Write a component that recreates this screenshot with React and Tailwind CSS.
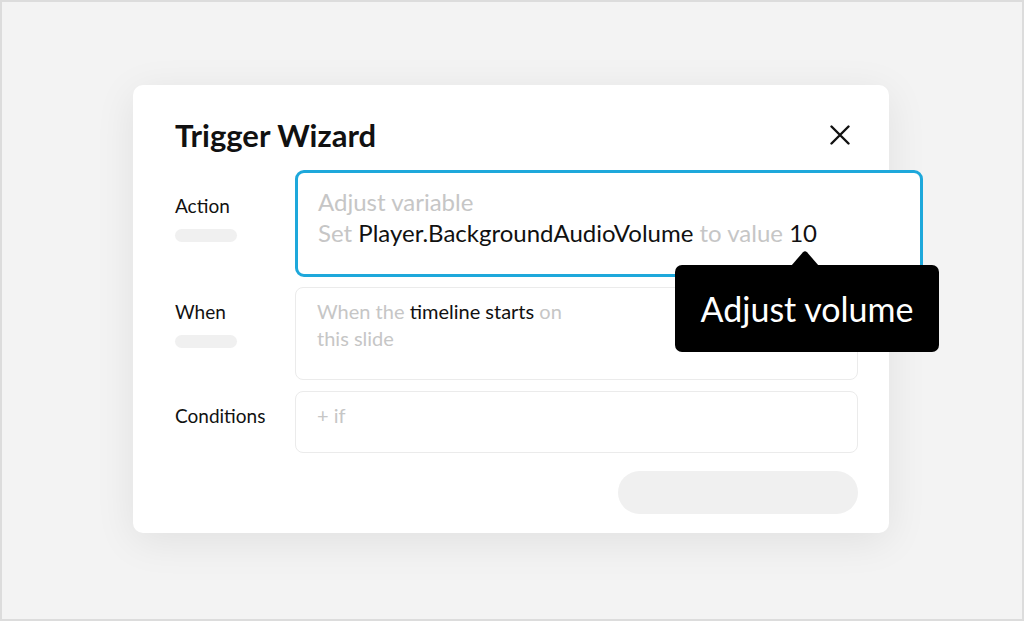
import React from "react";

export default function App() {
  return (
    <div
      className="w-[1024px] h-[621px] overflow-hidden bg-[#f3f3f3] border-2 border-[#dcdcdc]"
      style={{ fontFamily: "Lato, 'Open Sans', sans-serif" }}
    >
      <div className="ml-[131px] mt-[83px] w-[756px] h-[448px] bg-white rounded-[10px] shadow-[0_8px_40px_rgba(0,0,0,0.08)] pl-[42px] pt-[30px]">
        <div className="flex items-start justify-between pr-[39px]">
          <h1 className="text-[31px] leading-[40px] font-bold text-[#111]">Trigger Wizard</h1>
          <svg width="20" height="20" viewBox="0 0 20 20" className="mt-[10px]">
            <path d="M1.5 1.5 L18.5 18.5 M18.5 1.5 L1.5 18.5" stroke="#111" strokeWidth="2.4" strokeLinecap="round" />
          </svg>
        </div>

        <div className="mt-[15px] flex flex-col">
          {/* Action row */}
          <div className="flex">
            <div className="w-[120px] shrink-0 pt-[24px]">
              <div className="text-[19px] leading-[24px] text-[#111]">Action</div>
              <div className="mt-[11px] w-[62px] h-[13px] rounded-full bg-[#f0f0f0]"></div>
            </div>
            <div className="relative w-[628px] h-[107px] shrink-0 rounded-[9px] border-[3px] border-[#1ea8db] bg-white pl-[20px] pt-[13px]">
              <div className="text-[24px] leading-[31px] text-[#c6c6c6] whitespace-nowrap">Adjust variable</div>
              <div className="text-[24px] leading-[31px] text-[#c6c6c6] whitespace-nowrap">
                Set <span className="text-[#111]">Player.BackgroundAudioVolume</span> to value{" "}
                <span className="text-[#111]">10</span>
              </div>
              <div className="absolute left-[377px] top-[77px] z-10 flex flex-col items-start">
                <svg width="28" height="16" viewBox="0 0 28 16" className="ml-[116px] -mb-px">
                  <path d="M0 16 L12 2.2 Q14 0.2 16 2.2 L28 16 Z" fill="#000" />
                </svg>
                <div className="w-[264px] h-[87px] rounded-[7px] bg-black flex items-center justify-center">
                  <span className="text-[34px] leading-[40px] text-white">Adjust volume</span>
                </div>
              </div>
            </div>
          </div>

          {/* When row */}
          <div className="flex mt-[10px]">
            <div className="w-[120px] shrink-0 pt-[13px]">
              <div className="text-[19px] leading-[24px] text-[#111]">When</div>
              <div className="mt-[11px] w-[62px] h-[13px] rounded-full bg-[#f0f0f0]"></div>
            </div>
            <div className="w-[563px] h-[93px] shrink-0 rounded-[8px] border border-[#ebebeb] pl-[21px] pt-[10px]">
              <div className="text-[20px] leading-[27px] text-[#c6c6c6] whitespace-nowrap">
                When the <span className="text-[#111]">timeline starts</span> on
                <br />
                this slide
              </div>
            </div>
          </div>

          {/* Conditions row */}
          <div className="flex mt-[11px]">
            <div className="w-[120px] shrink-0 pt-[13px]">
              <div className="text-[19px] leading-[24px] text-[#111]">Conditions</div>
            </div>
            <div className="w-[563px] h-[62px] shrink-0 rounded-[8px] border border-[#ebebeb] pl-[21px] pt-[10px]">
              <div className="text-[20px] leading-[27px] text-[#c6c6c6]">+ if</div>
            </div>
          </div>

          <div className="flex justify-end w-[683px] mt-[18px]">
            <div className="w-[240px] h-[43px] rounded-full bg-[#f0f0f0]"></div>
          </div>
        </div>
      </div>
    </div>
  );
}
